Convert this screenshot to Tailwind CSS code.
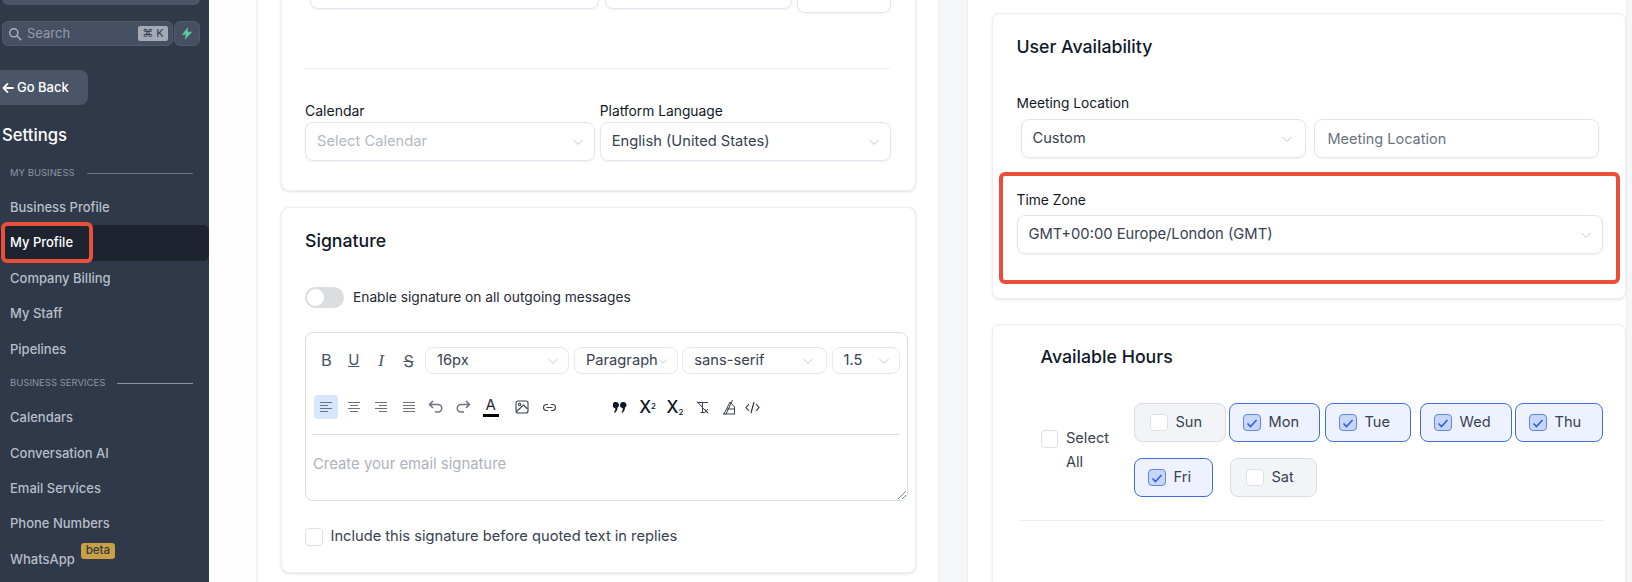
<!DOCTYPE html>
<html lang="en">
<head>
  <meta charset="UTF-8">
  <meta name="viewport" content="width=device-width, initial-scale=1.0">
  <title>Settings - My Profile</title>
  <script src="https://cdn.jsdelivr.net/npm/@tailwindcss/browser@4"></script>
</head>
<body class="bg-white [font-family:Inter,sans-serif]">
  <div class="flex w-[1632px] h-[582px] overflow-hidden">

    <!-- sidebar -->
    <aside class="relative w-[209px] shrink-0 h-full overflow-hidden bg-[#2f3949]">
      <div class="-mt-[25px] ml-[2px] w-[198px] h-[30px] rounded-md bg-[#4a5568]"></div>

      <div class="mt-[16px] ml-[2px] flex gap-px">
        <div class="w-[171px] h-[25px] flex items-center rounded-md border border-[#4f5a6b] bg-[#465062] pl-[5px] pr-[4px]">
          <svg class="w-[14px] h-[14px] shrink-0" viewBox="0 0 24 24" fill="none" stroke="#aeb5c1" stroke-width="2.4" stroke-linecap="round"><circle cx="10" cy="10" r="7"/><path d="M15.5 15.5L22 22"/></svg>
          <span class="ml-[5px] text-[13px] text-[#949cab]">Search</span>
          <span class="ml-auto w-[30px] h-[15px] flex items-center justify-center gap-[3px] rounded-[2px] bg-[#a3a9b5] text-[11px] leading-none text-[#2f3949] [font-family:'DejaVu_Sans',sans-serif]">⌘<span class="[font-family:Inter,sans-serif]">K</span></span>
        </div>
        <div class="w-[26px] h-[25px] flex items-center justify-center rounded-md border border-[#4f5a6b] bg-[#465062]">
          <svg class="w-[14px] h-[15px]" viewBox="0 0 24 24" fill="#58c99a"><path d="M14 1L3 14h7l-2 9 13-14h-8l1-8z"/></svg>
        </div>
      </div>

      <div class="mt-[24px] w-[88px] h-[35px] flex items-center pl-[2px] rounded-r-lg bg-[#4a5568] text-[13px] font-medium text-white">
        <svg class="w-[12px] h-[12px] mr-[3px]" viewBox="0 0 24 24" fill="none" stroke="#fff" stroke-width="3.6" stroke-linecap="round" stroke-linejoin="round"><path d="M22 12H3M11 4l-8 8 8 8"/></svg>
        Go Back
      </div>

      <h2 class="mt-[16px] ml-[2px] text-[16.7px] leading-[28px] font-medium text-white">Settings</h2>

      <div class="mt-[16px] ml-[10px] h-[16px] flex items-center text-[9.5px] text-[#8d95a4]">
        <span>MY BUSINESS</span>
        <span class="ml-auto mr-[16px] w-[106px] h-px bg-[#6b7483]"></span>
      </div>

      <nav class="mt-[9px] text-[13px] font-medium text-[#b9bec8]">
        <div class="h-[35.4px] flex items-center pl-[10px]">Business Profile</div>
        <div class="h-[35.4px] flex items-center pl-[10px] rounded-md bg-[#1e2330] text-white">My Profile</div>
        <div class="h-[35.4px] flex items-center pl-[10px]">Company Billing</div>
        <div class="h-[35.4px] flex items-center pl-[10px]">My Staff</div>
        <div class="h-[35.4px] flex items-center pl-[10px]">Pipelines</div>
      </nav>

      <div class="mt-[8.4px] ml-[10px] h-[16px] flex items-center text-[9.5px] text-[#8d95a4]">
        <span>BUSINESS SERVICES</span>
        <span class="ml-auto mr-[16px] w-[76px] h-px bg-[#8d95a4]"></span>
      </div>

      <nav class="mt-[9px] text-[13px] font-medium text-[#b9bec8]">
        <div class="h-[35.4px] flex items-center pl-[10px]">Calendars</div>
        <div class="h-[35.4px] flex items-center pl-[10px]">Conversation AI</div>
        <div class="h-[35.4px] flex items-center pl-[10px]">Email Services</div>
        <div class="h-[35.4px] flex items-center pl-[10px]">Phone Numbers</div>
        <div class="h-[35.4px] flex items-center pl-[10px]">WhatsApp
          <span class="ml-[6px] -mt-[17px] w-[34px] h-[16px] flex items-center justify-center rounded-[3px] bg-[#c9a043] text-[11.5px] text-[#2f3949]">beta</span>
        </div>
      </nav>

      <!-- red annotation -->
      <div class="absolute left-[1px] top-[222px] w-[92px] h-[41px] rounded-md border-[4px] border-[#e8503a]"></div>
    </aside>

    <div class="w-[47px] shrink-0 bg-[#fdfdfd]"></div>

    <!-- left column -->
    <main class="w-[682px] shrink-0 h-full overflow-hidden border-l-2 border-[#f1f2f4] pl-[22.5px]">
      <section class="-mt-[60px] w-[635px] h-[251px] rounded-lg border border-[#eceef1] shadow-[0_1px_3px_rgba(0,0,0,0.12)] bg-white pt-[29px] pl-[23.5px] pr-[24px]">
        <div class="flex items-start ml-[4.5px]">
          <div class="w-[289px] h-[39px] rounded-lg border border-[#e2e5ea] shadow-[0_1px_2px_rgba(0,0,0,0.06)]"></div>
          <div class="ml-[6px] w-[187px] h-[39px] rounded-lg border border-[#e2e5ea] shadow-[0_1px_2px_rgba(0,0,0,0.06)]"></div>
          <div class="ml-[5px] w-[94px] h-[43px] rounded-lg border border-[#e2e5ea] shadow-[0_1px_2px_rgba(0,0,0,0.06)]"></div>
        </div>
        <div class="mt-[55px] w-[585px] h-px bg-[#eceef2]"></div>
        <div class="mt-[32px] flex gap-[5px]">
          <div class="w-[290px]">
            <label class="block text-[14px] leading-[20px] text-[#111827]">Calendar</label>
            <div class="mt-px h-[39px] flex items-center justify-between rounded-lg border border-[#e2e5ea] shadow-[0_1px_2px_rgba(0,0,0,0.06)] pl-[11px] pr-[10px] text-[14.7px] text-[#b4b9c2]">
              Select Calendar
              <svg class="w-[12px] h-[12px]" viewBox="0 0 12 12" fill="none" stroke="#c3c7cf" stroke-width="1"><path d="M1.5 4L6 8.5 10.5 4"/></svg>
            </div>
          </div>
          <div class="w-[291px]">
            <label class="block text-[13.8px] leading-[20px] text-[#111827]">Platform Language</label>
            <div class="mt-px h-[39px] flex items-center justify-between rounded-lg border border-[#e2e5ea] shadow-[0_1px_2px_rgba(0,0,0,0.06)] pl-[11px] pr-[10px] text-[14.7px] text-[#374151]">
              English (United States)
              <svg class="w-[12px] h-[12px]" viewBox="0 0 12 12" fill="none" stroke="#c3c7cf" stroke-width="1"><path d="M1.5 4L6 8.5 10.5 4"/></svg>
            </div>
          </div>
        </div>
      </section>

      <section class="mt-[16px] w-[635px] h-[366px] rounded-lg border border-[#eceef1] shadow-[0_1px_3px_rgba(0,0,0,0.12)] bg-white pt-[19px] pl-[23.5px]">
        <h3 class="text-[17.7px] leading-[28px] font-medium text-[#111827]">Signature</h3>
        <div class="mt-[32px] flex items-center">
          <div class="w-[39px] h-[21px] rounded-full bg-[#dcdde0] p-[2px]"><div class="w-[17px] h-[17px] rounded-full bg-white"></div></div>
          <span class="ml-[9px] text-[13.76px] text-[#1f2937]">Enable signature on all outgoing messages</span>
        </div>

        <!-- editor -->
        <div class="relative mt-[24px] w-[603px] h-[169px] rounded-lg border border-[#d8dbe3] pt-[14px] pl-[6.7px]">
          <div class="flex items-center h-[27px] text-[#4b5563]">
            <span class="w-[27.4px] text-center text-[16.5px]">B</span>
            <span class="w-[27.4px] text-center text-[15px] underline">U</span>
            <span class="w-[27.4px] text-center text-[17px] italic [font-family:'Liberation_Serif',serif]">I</span>
            <span class="w-[27.4px] text-center text-[16px] line-through">S</span>
            <div class="ml-[2.7px] w-[144px] h-[27px] flex items-center justify-between rounded-lg border border-[#e5e7eb] pl-[11px] pr-[9px] text-[14.7px] text-[#374151]">16px
              <svg class="w-[12px] h-[12px]" viewBox="0 0 12 12" fill="none" stroke="#c3c7cf" stroke-width="1"><path d="M1.5 4L6 8.5 10.5 4"/></svg></div>
            <div class="ml-[5px] w-[104px] h-[27px] flex items-center justify-between rounded-lg border border-[#e5e7eb] pl-[11px] pr-[9px] text-[14.7px] text-[#374151]">Paragraph
              <svg class="w-[12px] h-[12px]" viewBox="0 0 12 12" fill="none" stroke="#c3c7cf" stroke-width="1"><path d="M1.5 4L6 8.5 10.5 4"/></svg></div>
            <div class="ml-[4.3px] w-[145px] h-[27px] flex items-center justify-between rounded-lg border border-[#e5e7eb] pl-[11px] pr-[12px] text-[14.7px] text-[#374151]">sans-serif
              <svg class="w-[12px] h-[12px]" viewBox="0 0 12 12" fill="none" stroke="#c3c7cf" stroke-width="1"><path d="M1.5 4L6 8.5 10.5 4"/></svg></div>
            <div class="ml-[4.3px] w-[68px] h-[27px] flex items-center justify-between rounded-lg border border-[#e5e7eb] pl-[11px] pr-[9px] text-[14.7px] text-[#374151]">1.5
              <svg class="w-[12px] h-[12px]" viewBox="0 0 12 12" fill="none" stroke="#c3c7cf" stroke-width="1"><path d="M1.5 4L6 8.5 10.5 4"/></svg></div>
          </div>

          <div class="mt-[21px] flex items-center h-[24px]">
            <span class="w-[27.4px] flex justify-center">
              <span class="w-[24px] h-[24px] flex items-center justify-center rounded bg-[#d6e6fb]">
                <svg class="w-[14px] h-[14px]" viewBox="0 0 14 14" stroke="#6b7280" stroke-width="1"><path d="M1 2.5h12M1 5.5h8M1 8.5h12M1 11.5h8"/></svg>
              </span>
            </span>
            <span class="w-[27.4px] flex justify-center"><svg class="w-[14px] h-[14px]" viewBox="0 0 14 14" stroke="#6b7280" stroke-width="1"><path d="M1 2.5h12M3 5.5h8M1 8.5h12M3 11.5h8"/></svg></span>
            <span class="w-[27.4px] flex justify-center"><svg class="w-[14px] h-[14px]" viewBox="0 0 14 14" stroke="#6b7280" stroke-width="1"><path d="M1 2.5h12M5 5.5h8M1 8.5h12M5 11.5h8"/></svg></span>
            <span class="w-[27.4px] flex justify-center"><svg class="w-[14px] h-[14px]" viewBox="0 0 14 14" stroke="#6b7280" stroke-width="1"><path d="M1 2.5h12M1 5.5h12M1 8.5h12M1 11.5h12"/></svg></span>
            <span class="w-[27.4px] flex justify-center"><svg class="w-[16px] h-[16px]" viewBox="0 0 16 16" fill="none" stroke="#6b7280" stroke-width="1.5"><path d="M5 2L1.5 5.5 5 9M2 5.5h8a3.6 3.6 0 010 7.5H7"/></svg></span>
            <span class="w-[27.4px] flex justify-center"><svg class="w-[16px] h-[16px]" viewBox="0 0 16 16" fill="none" stroke="#6b7280" stroke-width="1.5"><path d="M11 2l3.5 3.5L11 9M14 5.5H6a3.6 3.6 0 000 7.5h3"/></svg></span>
            <span class="w-[27.4px] flex flex-col items-center text-[15px] leading-[15px] text-[#1f2937]">A<span class="mt-[2px] w-[16px] h-[3px] bg-black"></span></span>
            <span class="ml-[4.3px] w-[27.4px] flex justify-center"><svg class="w-[14px] h-[14px]" viewBox="0 0 14 14" fill="none" stroke="#374151" stroke-width="1.1"><rect x="1" y="1" width="12" height="12" rx="2"/><circle cx="4.6" cy="4.6" r="1.2"/><path d="M1.5 11.5l7-6.5 4 4"/></svg></span>
            <span class="w-[27.4px] flex justify-center"><svg class="w-[15px] h-[15px]" viewBox="0 0 15 15" fill="none" stroke="#374151" stroke-width="1.1"><path d="M6 4.5H4.5a3 3 0 000 6H6M9 4.5h1.5a3 3 0 010 6H9M4.5 7.5h6"/></svg></span>
            <span class="ml-[43px] w-[27.4px] flex justify-center"><svg class="w-[14px] h-[11px]" viewBox="0 0 14 11" fill="#111827"><path d="M3 0a3 3 0 011.5 5.6C4.5 8 3.500 10 1.500 11L1 10c1-.8 1.300-1.800 1.300-3.800A3 3 0 013 0zM10.500 0A3 3 0 0112 5.600c0 2.400-1 4.400-3 5.400L8.500 10c1-.8 1.300-1.800 1.300-3.800A3 3 0 0110.500 0z"/></svg></span>
            <span class="w-[27.4px] text-center text-[17px] leading-none font-medium text-[#111827]">X<sup class="text-[8px] font-medium">2</sup></span>
            <span class="w-[27.4px] text-center text-[17px] leading-none font-medium text-[#111827]">X<sub class="text-[8px] font-medium">2</sub></span>
            <span class="w-[27.4px] flex justify-center"><svg class="w-[15px] h-[15px]" viewBox="0 0 15 15" fill="none" stroke="#374151" stroke-width="1"><path d="M2 2.5h11M7.5 2.5v10M5.5 12.5h4M2 1.5l11 12M9.5 9l3.5 4M13 9l-3.500 4"/></svg></span>
            <span class="w-[27.4px] flex justify-center"><svg class="w-[15px] h-[16px]" viewBox="0 0 15 16" fill="none" stroke="#374151" stroke-width="1"><path d="M1 15h12M12.5 15V8L8 3 2 15M5 10h7M10.500 1L4 15"/></svg></span>
            <span class="-ml-[3px] w-[24px] flex justify-center"><svg class="w-[15px] h-[13px]" viewBox="0 0 15 13" fill="none" stroke="#1f2937" stroke-width="1.1"><path d="M4 3L1 6.5 4 10M11 3l3 3.500L11 10M9 1L6 12"/></svg></span>
          </div>

          <div class="mt-[15px] ml-[0.3px] w-[586px] h-px bg-[#d8dbe3]"></div>
          <p class="mt-[17px] ml-[0.3px] text-[14.86px] leading-[24px] text-[#aeb3bc]">Create your email signature</p>
          <svg class="absolute right-[1px] bottom-[1px] w-[8px] h-[8px]" viewBox="0 0 8 8" stroke="#6b7280" stroke-width="0.8"><path d="M0 8L8 0M4 8l4-4"/></svg>
        </div>

        <div class="mt-[25px] flex items-center">
          <span class="w-[17.5px] h-[17.5px] rounded-[4px] border border-[#dcdfe5]"></span>
          <span class="ml-[8px] text-[14.66px] text-[#374151]">Include this signature before quoted text in replies</span>
        </div>
      </section>
    </main>

    <div class="w-[30px] shrink-0 bg-[#f4f6fa] border-x border-[#eceef2]"></div>

    <!-- right column -->
    <div class="relative w-[658px] shrink-0 h-full overflow-hidden pl-[24px]">
      <section class="mt-[13px] w-[634px] h-[286px] rounded-lg border border-[#eceef1] shadow-[0_1px_3px_rgba(0,0,0,0.1)] bg-white pt-[19px] pl-[23.5px]">
        <h3 class="text-[17.7px] leading-[28px] font-medium text-[#111827]">User Availability</h3>
        <label class="block mt-[32px] text-[13.75px] leading-[20px] text-[#111827]">Meeting Location</label>
        <div class="mt-[6px] ml-[4px] flex gap-[8px]">
          <div class="w-[285px] h-[39px] flex items-center justify-between rounded-lg border border-[#e2e5ea] shadow-[0_1px_2px_rgba(0,0,0,0.06)] pl-[11px] pr-[12px] text-[14.6px] text-[#374151]">Custom
            <svg class="w-[12px] h-[12px]" viewBox="0 0 12 12" fill="none" stroke="#c3c7cf" stroke-width="1"><path d="M1.5 4L6 8.5 10.5 4"/></svg></div>
          <div class="w-[285px] h-[39px] flex items-center rounded-lg border border-[#e2e5ea] shadow-[0_1px_2px_rgba(0,0,0,0.06)] pl-[13px] text-[14.5px] text-[#6b7280]">Meeting Location</div>
        </div>
        <label class="block mt-[32px] text-[13.8px] leading-[20px] text-[#111827]">Time Zone</label>
        <div class="mt-[5px] w-[586px] h-[39px] flex items-center justify-between rounded-lg border border-[#e2e5ea] shadow-[0_1px_2px_rgba(0,0,0,0.06)] pl-[11px] pr-[10px] text-[14.75px] text-[#374151]">GMT+00:00 Europe/London (GMT)
          <svg class="w-[12px] h-[12px]" viewBox="0 0 12 12" fill="none" stroke="#c3c7cf" stroke-width="1"><path d="M1.5 4L6 8.5 10.5 4"/></svg></div>
      </section>

      <section class="mt-[25px] w-[634px] h-[300px] rounded-lg border border-[#eceef1] shadow-[0_1px_3px_rgba(0,0,0,0.1)] bg-white pt-[18px] pl-[24.5px]">
        <h3 class="ml-[23px] text-[17.75px] leading-[28px] font-medium text-[#111827]">Available Hours</h3>
        <div class="mt-[32px] flex items-start">
          <div class="ml-[23px] w-[93.5px] mt-[23px] flex items-start">
            <span class="mt-[4px] w-[17.5px] h-[17.5px] shrink-0 rounded-[4px] border border-[#dcdfe5]"></span>
            <span class="ml-[8px] w-[50px] text-[14.6px] leading-[24px] text-[#374151]">Select All</span>
          </div>
          <div class="w-[470px] flex flex-wrap gap-y-[16px] text-[14.6px] text-[#374151]">
            <div class="w-[92px] h-[39px] mr-[3px] flex items-center rounded-lg border border-[#d9dce3] bg-[#f3f4f7] pl-[15px]">
              <span class="w-[17.5px] h-[17.5px] rounded-[4px] border border-[#dcdfe5] bg-white mr-[8px]"></span>Sun</div>
            <div class="w-[91px] h-[39px] mr-[5px] flex items-center rounded-lg border border-[#3f6fe4] bg-[#edf2fe] pl-[13px]">
              <span class="w-[17.5px] h-[17.5px] flex items-center justify-center rounded-[4px] border border-[#5f86e8] bg-[#c7d7fb] mr-[8px]"><svg class="w-[12px] h-[12px]" viewBox="0 0 12 12" fill="none" stroke="#2f5fdc" stroke-width="1.6"><path d="M1.5 6.5L4.5 9.5 10.5 3"/></svg></span>Mon</div>
            <div class="w-[86px] h-[39px] mr-[9px] flex items-center rounded-lg border border-[#3f6fe4] bg-[#edf2fe] pl-[13px]">
              <span class="w-[17.5px] h-[17.5px] flex items-center justify-center rounded-[4px] border border-[#5f86e8] bg-[#c7d7fb] mr-[8px]"><svg class="w-[12px] h-[12px]" viewBox="0 0 12 12" fill="none" stroke="#2f5fdc" stroke-width="1.6"><path d="M1.5 6.5L4.5 9.5 10.5 3"/></svg></span>Tue</div>
            <div class="w-[92px] h-[39px] mr-[3px] flex items-center rounded-lg border border-[#3f6fe4] bg-[#edf2fe] pl-[13px]">
              <span class="w-[17.5px] h-[17.5px] flex items-center justify-center rounded-[4px] border border-[#5f86e8] bg-[#c7d7fb] mr-[8px]"><svg class="w-[12px] h-[12px]" viewBox="0 0 12 12" fill="none" stroke="#2f5fdc" stroke-width="1.6"><path d="M1.5 6.5L4.5 9.5 10.5 3"/></svg></span>Wed</div>
            <div class="w-[88px] h-[39px] flex items-center rounded-lg border border-[#3f6fe4] bg-[#edf2fe] pl-[13px]">
              <span class="w-[17.5px] h-[17.5px] flex items-center justify-center rounded-[4px] border border-[#5f86e8] bg-[#c7d7fb] mr-[8px]"><svg class="w-[12px] h-[12px]" viewBox="0 0 12 12" fill="none" stroke="#2f5fdc" stroke-width="1.6"><path d="M1.5 6.5L4.5 9.5 10.5 3"/></svg></span>Thu</div>
            <div class="w-[79px] h-[39px] mr-[17px] flex items-center rounded-lg border border-[#3f6fe4] bg-[#edf2fe] pl-[13px]">
              <span class="w-[17.5px] h-[17.5px] flex items-center justify-center rounded-[4px] border border-[#5f86e8] bg-[#c7d7fb] mr-[8px]"><svg class="w-[12px] h-[12px]" viewBox="0 0 12 12" fill="none" stroke="#2f5fdc" stroke-width="1.6"><path d="M1.5 6.5L4.5 9.5 10.5 3"/></svg></span>Fri</div>
            <div class="w-[87px] h-[39px] flex items-center rounded-lg border border-[#d9dce3] bg-[#f3f4f7] pl-[15px]">
              <span class="w-[17.5px] h-[17.5px] rounded-[4px] border border-[#dcdfe5] bg-white mr-[8px]"></span>Sat</div>
          </div>
        </div>
        <div class="mt-[23px] w-[586px] h-px bg-[#eceef2]"></div>
      </section>

      <!-- red annotation -->
      <div class="absolute left-[31px] top-[172px] w-[621px] h-[112px] rounded-md border-[4px] border-[#e8503a]"></div>
    </div>

    <div class="w-[6px] shrink-0 bg-[#f4f6fa] border-l border-[#eceef2]"></div>
  </div>
</body>
</html>
